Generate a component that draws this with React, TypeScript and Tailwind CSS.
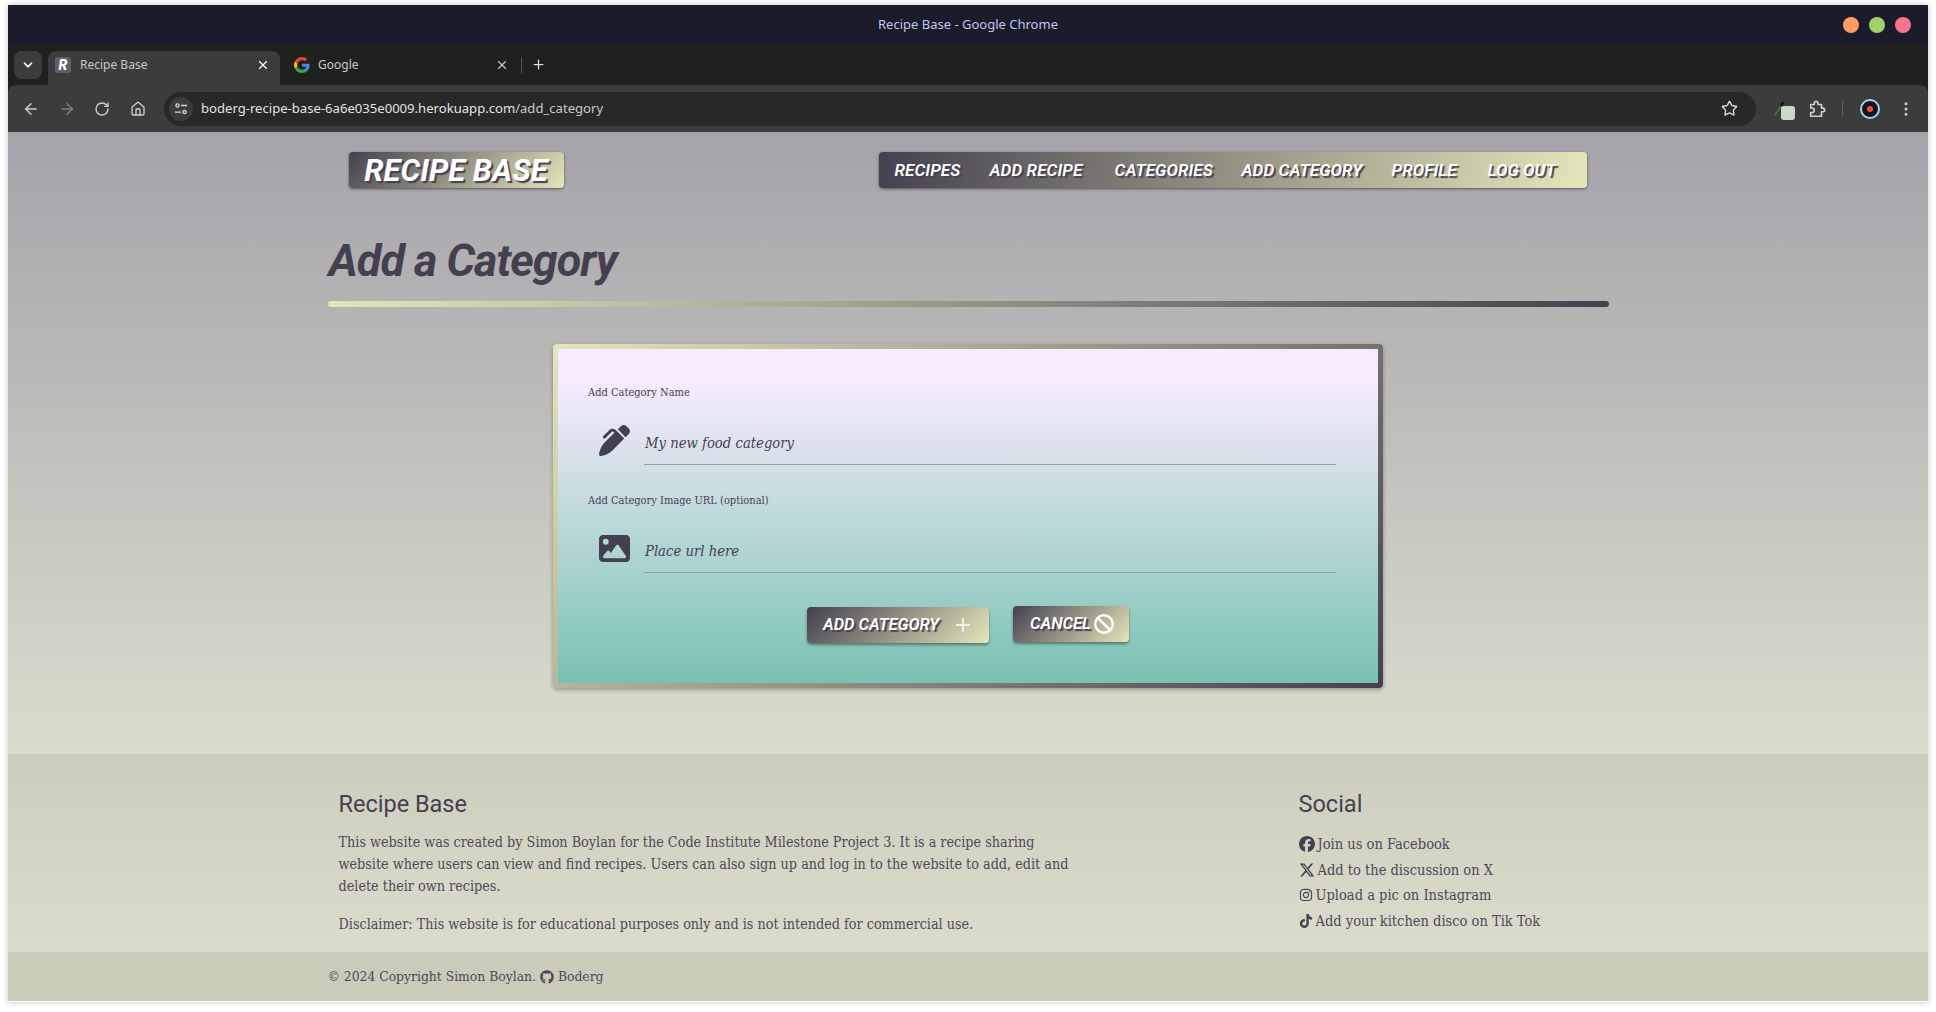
import { ArrowLeft, ArrowRight, ChevronDown, EllipsisVertical, House, Plus, RotateCw, Star, X } from "lucide-react";
import { FaBan, FaFacebook, FaGithub, FaImage, FaInstagram, FaPenClip, FaTiktok, FaXTwitter } from "react-icons/fa6";

const heading = "font-['Roboto',sans-serif]";
const body = "font-['DejaVu_Serif_Condensed','DejaVu_Serif',serif]";
const ui = "font-['Noto_Sans',sans-serif]";
const shine = "bg-[linear-gradient(135deg,#45404f,#e4e6bb)]";
const navShadow = "[text-shadow:2px_2px_1px_#45404f]";

const navItems = [
  { label: "RECIPES", width: "w-[65px]" },
  { label: "ADD RECIPE", width: "w-[95px]" },
  { label: "CATEGORIES", width: "w-[97px]" },
  { label: "ADD CATEGORY", width: "w-[120px]" },
  { label: "PROFILE", width: "w-[66px]" },
  { label: "LOG OUT", width: "w-[69px]" },
];

const socials = [
  { icon: <FaFacebook className="size-4" />, text: "Join us on Facebook" },
  { icon: <FaXTwitter className="size-4" />, text: "Add to the discussion on X" },
  { icon: <FaInstagram className="size-[14px]" />, text: "Upload a pic on Instagram" },
  { icon: <FaTiktok className="size-[14px]" />, text: "Add your kitchen disco on Tik Tok" },
];

const GoogleIcon = () => (
  <svg viewBox="0 0 48 48" className="size-4">
    <path fill="#EA4335" d="M24 9.5c3.5 0 6.700 1.300 9.100 3.500l6.800-6.800C35.800 2.400 30.300 0 24 0 14.600 0 6.500 5.400 2.600 13.200l7.900 6.200C12.400 13.700 17.700 9.500 24 9.500z" />
    <path fill="#4285F4" d="M46.900 24.500c0-1.600-.2-3.100-.4-4.500H24v9h12.900c-.6 3-2.200 5.400-4.700 7.100l7.600 5.900c4.400-4.100 7.100-10.100 7.100-17.500z" />
    <path fill="#FBBC05" d="M10.500 28.600c-.5-1.400-.8-3-.8-4.600s.3-3.200.8-4.600l-7.900-6.200C.9 16.500 0 20.100 0 24s.9 7.500 2.600 10.800l7.900-6.200z" />
    <path fill="#34A853" d="M24 48c6.500 0 11.900-2.100 15.900-5.800l-7.600-5.900c-2.200 1.500-5 2.300-8.200 2.300-6.300 0-11.600-4.200-13.500-9.900l-7.900 6.200C6.500 42.600 14.600 48 24 48z" />
  </svg>
);

const SiteInfoIcon = () => (
  <svg viewBox="0 0 16 16" className="size-[14px]" fill="none" stroke="#d5d5d5" strokeWidth="1.500">
    <circle cx="4" cy="4" r="1.800" />
    <path d="M8 4h7M1 11.500h7" />
    <circle cx="12" cy="11.500" r="1.800" />
  </svg>
);

const ExtensionIcon = () => (
  <svg viewBox="0 0 20 20" className="size-[18px]" fill="none" stroke="#cfcfcf" strokeWidth="1.800" strokeLinejoin="round">
    <path d="M3 5h4V3.500a2 2 0 0 1 4 0V5h4v4h1.500a2 2 0 0 1 0 4H15v5H3v-4h1.500a2.500 2.500 0 0 0 0-5H3z" />
  </svg>
);

const Dropper = () => (
  <div className="flex w-[22px] items-end">
    <svg viewBox="0 0 10 16" className="mb-[2px] h-4 w-[10px]" fill="none" strokeWidth="1.500">
      <path d="M1 15 7 6" stroke="#3f7d55" />
      <path d="M7 6 9 2" stroke="#111" strokeWidth="2.500" />
    </svg>
    <div className="-ml-[3px] -mb-[2px] size-[14px] rounded-[3px] bg-[#c8d9c6]" />
  </div>
);

const Avatar = () => (
  <div className="flex size-5 items-center justify-center rounded-full border-2 border-[#a8d4f0] bg-[#14131f]">
    <div className="size-[6px] rounded-full bg-[#f0503c]" />
  </div>
);

const BrowserChrome = () => (
  <>
    <div className="flex h-10 items-center bg-[#1b1c2b] pr-[17px]">
      <div className="w-[85px]" />
      <div className={`flex-1 text-center text-[13px] text-[#bcc8ee] ${ui}`}>Recipe Base - Google Chrome</div>
      <div className="flex w-[68px] justify-end gap-[10px]">
        <div className="size-4 rounded-full bg-[#fe9c5f]" />
        <div className="size-4 rounded-full bg-[#a1d06c]" />
        <div className="size-4 rounded-full bg-[#f8758f]" />
      </div>
    </div>
    <div className={`flex h-10 items-end bg-[#20211f] pl-[6px] text-xs text-[#c8c8c8] ${ui}`}>
      <div className="mb-[6px] flex h-7 w-[28px] items-center justify-center rounded-lg bg-[#3c3c3c]">
        <ChevronDown className="size-[14px] text-white" strokeWidth={3} />
      </div>
      <div className="ml-[6px] flex h-[34px] w-[232px] items-center rounded-t-lg bg-[#3c3c3c] px-[7px] pb-[6px]">
        <div className={`flex size-4 items-center justify-center rounded-[2px] bg-[#5f5d66] text-[14px] font-black italic text-white ${heading}`}>R</div>
        <span className="ml-[9px] flex-1">Recipe Base</span>
        <X className="mr-[3px] size-[14px] text-white" />
      </div>
      <div className="flex h-[34px] w-[241px] items-center pb-[6px] pl-[14px] pr-[12px]">
        <GoogleIcon />
        <span className="ml-[8px] flex-1">Google</span>
        <X className="size-[14px] text-[#c8c8c8]" />
      </div>
      <div className="mb-[12px] h-[16px] w-px bg-[#555]" />
      <Plus className="mb-[13px] ml-[9px] size-[15px] text-[#dddddd]" />
    </div>
    <div className="bg-[#20211f]">
      <div className="flex h-[47px] items-center rounded-t-lg bg-[#3c3c3c] pr-[13px]">
        <div className="flex w-[156px] items-center pl-[14px] text-[#cfcfcf]">
          <ArrowLeft className="size-[18px]" />
          <ArrowRight className="ml-[18px] size-[18px] text-[#7c7c7c]" />
          <RotateCw className="ml-[18px] size-4" />
          <House className="ml-[20px] size-4" />
        </div>
        <div className="flex h-[34px] flex-1 items-center rounded-full bg-[#282828] pl-[5px] pr-[18px]">
          <div className="flex size-6 items-center justify-center rounded-full bg-[#3c3c3c]"><SiteInfoIcon /></div>
          <div className={`ml-[8px] flex-1 text-[13.100px] text-[#c9c9c9] ${ui}`}>
            <span className="text-[#e3e3e3]">boderg-recipe-base-6a6e035e0009.herokuapp.com</span>/add_category
          </div>
          <Star className="size-[17px] text-[#d9d9d9]" strokeWidth={2} />
        </div>
        <div className="ml-[18px] flex flex-1 grow-0 items-center text-[#cfcfcf]">
          <Dropper />
          <div className="ml-[12px]"><ExtensionIcon /></div>
          <div className="ml-[16px] h-[16px] w-px bg-[#5f5f5f]" />
          <div className="ml-[17px]"><Avatar /></div>
          <EllipsisVertical className="ml-[17px] size-[18px]" />
        </div>
      </div>
    </div>
  </>
);

const Field = (props: { label: string; placeholder: string; icon: React.ReactNode; className?: string }) => (
  <div className={props.className}>
    <label className={`block text-[11px] leading-4 text-[#45404f] ${body}`}>{props.label}</label>
    <div className="mt-[17px] flex items-start">
      <div className="ml-[11px] flex h-[44px] w-[45px] items-center text-[#45404f]">{props.icon}</div>
      <div className={`h-[47px] flex-1 border-b border-[#9e9e9e] pl-px pt-[13px] text-[14.700px] italic leading-6 text-[#45404f] ${body}`}>
        {props.placeholder}
      </div>
    </div>
  </div>
);

const ActionButton = (props: { label: string; icon: React.ReactNode; className: string }) => (
  <div className={`flex h-9 items-center rounded-[4px] ${shine} shadow-[0_2px_3px_rgba(0,0,0,0.4)] ${props.className}`}>
    <span className={`text-[16.500px] font-semibold italic text-white ${navShadow} ${heading}`}>{props.label}</span>
    {props.icon}
  </div>
);

const PageBody = () => (
  <div className="flex flex-1 flex-col">
    <div className="flex h-[622px] flex-col items-center bg-[linear-gradient(#a5a3aa,#dcdccd)]">
      <div className="w-[1281px]">
        <div className="flex items-start justify-between pl-[21px] pr-[22px] pt-5">
          <div className={`flex h-9 w-[215px] items-center justify-center rounded-[4px] pt-[2px] ${shine} shadow-[0_1px_3px_rgba(0,0,0,0.5)]`}>
            <span className={`text-[31px] font-bold italic text-white [text-shadow:2px_2px_1px_#45404f] ${heading}`}>RECIPE BASE</span>
          </div>
          <nav className="flex h-9 w-[708px] items-center gap-[30px] rounded-[4px] bg-[linear-gradient(100deg,#45404f,#e4e6bb)] pl-[16px] pt-[2px] shadow-[0_1px_3px_rgba(0,0,0,0.5)]">
            {navItems.map((item) => (
              <span key={item.label} className={`${item.width} whitespace-nowrap text-[17px] font-semibold italic tracking-[0.1px] text-white ${navShadow} ${heading}`}>
                {item.label}
              </span>
            ))}
          </nav>
        </div>
        <h1 className={`mt-[43px] pl-[1px] text-[45px] font-bold italic leading-[60px] tracking-[-1px] text-[#45404f] ${heading}`}>Add a Category</h1>
        <div className="mt-[10px] h-[6px] rounded-full bg-[linear-gradient(90deg,#e4e6bb,#45404f)]" />
      </div>
      <div className="mt-[37px] w-[830px] rounded-[4px] bg-[linear-gradient(135deg,#e4e6bb,#45404f)] p-[5px] shadow-[0_2px_4px_rgba(0,0,0,0.3)]">
        <div className="h-[334px] bg-[linear-gradient(#f7ebfd_10%,#78c2b2)] px-[30px] pt-[36px]">
          <div className="pr-[12px]">
            <Field label="Add Category Name" placeholder="My new food category" icon={<FaPenClip className="size-[31px]" />} />
            <Field className="mt-[28px]" label="Add Category Image URL (optional)" placeholder="Place url here" icon={<FaImage className="size-[31px]" />} />
          </div>
          <div className="mt-[34px] flex justify-center gap-[24px]">
            <ActionButton
              className="w-[182px] pl-[16px]"
              label="ADD CATEGORY"
              icon={<Plus className="ml-[13px] size-[22px] text-white" strokeWidth={1.500} />}
            />
            <ActionButton
              className="-mt-[1px] w-[116px] pl-[17px]"
              label="CANCEL"
              icon={<FaBan className="ml-[3px] size-5 text-white" />}
            />
          </div>
        </div>
      </div>
    </div>
    <footer className="flex h-[198px] justify-center bg-[linear-gradient(#cdcdbe,#dcdccd)] text-[#45404f]">
      <div className="flex w-[1281px] pl-[11px] pt-[35px]">
        <div className="w-[960px]">
          <h4 className={`text-[23.500px] font-normal leading-[30px] ${heading}`}>Recipe Base</h4>
          <p className={`mt-[12px] w-[735px] text-[14.250px] leading-[22px] text-[#4d4956] ${body}`}>
            This website was created by Simon Boylan for the Code Institute Milestone Project 3. It is a recipe sharing website where users can view and find recipes. Users can also sign up and log in to the website to add, edit and delete their own recipes.
          </p>
          <p className={`mt-[16px] text-[14.250px] leading-[22px] text-[#4d4956] ${body}`}>
            Disclaimer: This website is for educational purposes only and is not intended for commercial use.
          </p>
        </div>
        <div>
          <h4 className={`text-[23.500px] font-normal leading-[30px] ${heading}`}>Social</h4>
          <ul className={`mt-[14px] flex flex-col gap-[3.500px] text-[14.500px] leading-[22px] text-[#4d4956] ${body}`}>
            {socials.map((s) => (
              <li key={s.text} className="flex items-center gap-[3px]">
                <span className="text-[#45404f]">{s.icon}</span>
                {s.text}
              </li>
            ))}
          </ul>
        </div>
      </div>
    </footer>
    <div className="flex h-[49px] justify-center bg-[#cbcbba]">
      <div className={`flex w-[1281px] items-center gap-[4px] text-[13.750px] text-[#4d4956] ${body}`}>
        © 2024 Copyright Simon Boylan.
        <FaGithub className="size-[14px]" />
        Boderg
      </div>
    </div>
  </div>
);

export default function App() {
  return (
    <div className="h-[1012px] overflow-hidden bg-white px-2 pb-[10px] pt-[5px]">
      <div className="flex h-[997px] flex-col shadow-[0_0_6px_rgba(0,0,0,0.25)]">
        <BrowserChrome />
        <PageBody />
      </div>
    </div>
  );
}
